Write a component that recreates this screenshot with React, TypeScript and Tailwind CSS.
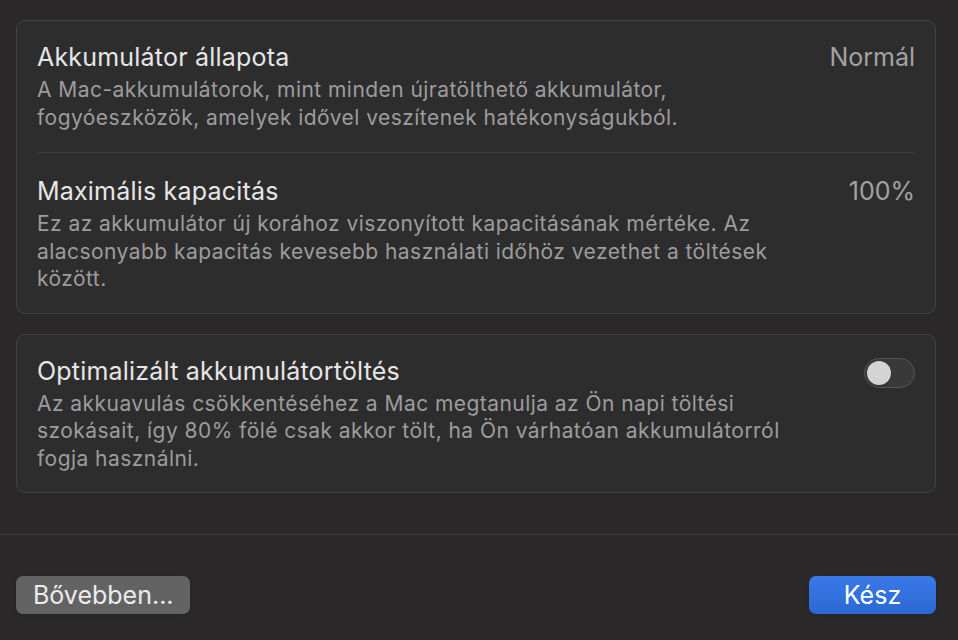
import React, { useState } from 'react';

// ─── Small pieces ─────────────────────────────────────────────────────────────

function Toggle({ on, onChange }: { on: boolean; onChange: (v: boolean) => void }) {
  return (
    <button
      onClick={() => onChange(!on)}
      className={
        'relative shrink-0 mt-px w-[51px] h-[30px] rounded-full border border-[#555455] ' +
        (on ? 'bg-[#2f6fdb]' : 'bg-[#3a393a]')
      }
      aria-pressed={on}
    >
      <span
        className={
          'absolute top-[2px] w-[24px] h-[24px] rounded-full bg-[#d4d4d4] shadow ' +
          (on ? 'left-[23px]' : 'left-[2px]')
        }
      />
    </button>
  );
}

function Row({
  title,
  value,
  lines,
  right,
}: {
  title: string;
  value?: string;
  lines: string[];
  right?: React.ReactNode;
}) {
  return (
    <div className="flex items-start justify-between gap-6">
      <div>
        <p className="text-[25px] leading-[28px] tracking-[0.2px] text-[#e6e6e6]">{title}</p>
        <p className="mt-[5px] text-[21px] leading-[27.5px] tracking-[0.45px] text-[#9d9c9d] whitespace-nowrap">
          {lines.map((l, i) => (
            <React.Fragment key={i}>
              {l}
              {i < lines.length - 1 && <br />}
            </React.Fragment>
          ))}
        </p>
      </div>
      {value && <p className="text-[25px] leading-[28px] text-[#a3a2a3]">{value}</p>}
      {right}
    </div>
  );
}

// ─── Page ─────────────────────────────────────────────────────────────────────

export default function App() {
  const [optimized, setOptimized] = useState(false);

  return (
    <div
      className="w-[958px] h-[640px] bg-[#2a2829] flex flex-col overflow-hidden"
      style={{ fontFamily: 'Inter, "Noto Sans", "Liberation Sans", sans-serif' }}
    >
      <div className="pl-4 pr-[22px] pt-5 flex flex-col gap-5">
        {/* Battery health */}
        <div className="rounded-[9px] border border-[#434243] bg-[#2e2d2e] px-5">
          <div className="pt-[22px] pb-[21px] border-b border-[#3d3c3d]">
            <Row
              title="Akkumulátor állapota"
              value="Normál"
              lines={[
                'A Mac-akkumulátorok, mint minden újratölthető akkumulátor,',
                'fogyóeszközök, amelyek idővel veszítenek hatékonyságukból.',
              ]}
            />
          </div>
          <div className="pt-6 pb-5">
            <Row
              title="Maximális kapacitás"
              value="100%"
              lines={[
                'Ez az akkumulátor új korához viszonyított kapacitásának mértéke. Az',
                'alacsonyabb kapacitás kevesebb használati időhöz vezethet a töltések',
                'között.',
              ]}
            />
          </div>
        </div>

        {/* Optimized charging */}
        <div className="rounded-[9px] border border-[#434243] bg-[#2e2d2e] px-5 pt-[22px] pb-5">
          <Row
            title="Optimalizált akkumulátortöltés"
            lines={[
              'Az akkuavulás csökkentéséhez a Mac megtanulja az Ön napi töltési',
              'szokásait, így 80% fölé csak akkor tölt, ha Ön várhatóan akkumulátorról',
              'fogja használni.',
            ]}
            right={<Toggle on={optimized} onChange={setOptimized} />}
          />
        </div>
      </div>

      {/* Footer */}
      <div className="mt-[41px] border-t border-[#3d3c3d] pl-4 pr-[22px] pt-[41px] flex items-center justify-between">
        <button className="h-[38px] w-[174px] rounded-[7px] bg-[#646364] text-left pl-[17px] text-[25px] leading-[38px] text-[#ececec] shadow-sm">
          Bővebben...
        </button>
        <button className="h-[38px] w-[127px] rounded-[7px] bg-gradient-to-b from-[#3a7ae6] to-[#2c68d4] text-[25px] leading-[38px] text-white shadow-sm">
          Kész
        </button>
      </div>
    </div>
  );
}
